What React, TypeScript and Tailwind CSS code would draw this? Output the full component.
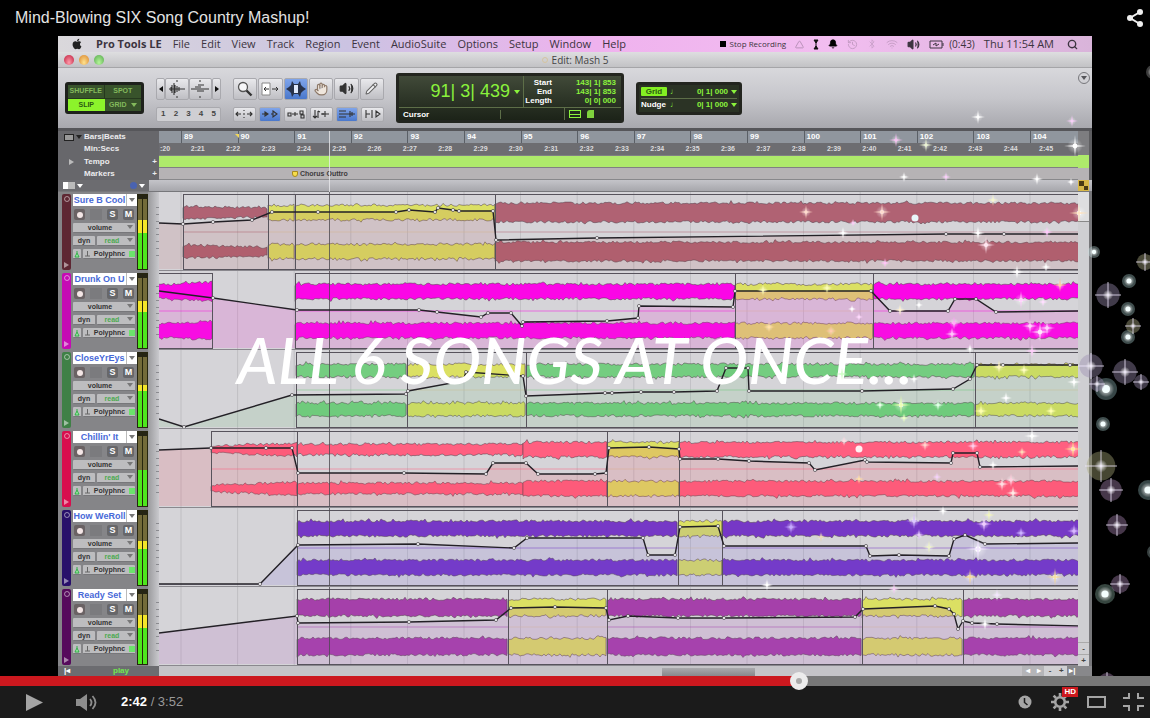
import type { ReactNode } from 'react'
import { FaApple } from 'react-icons/fa'
import { Bell, Bluetooth, Hand, History, Pencil, Search, Triangle, Volume2, Wifi } from 'lucide-react'

type Point = [number, number]

interface Region {
  from: number
  to: number
  half: number
  endHalf?: number
  yellow?: boolean
  joined?: boolean
}

interface Track {
  name: string
  strip: string
  wave: string
  tint: string
  tintOpacity: number
  meterYellow: number
  regions: Region[]
  automation: Point[]
}

// timeline units: one unit is one pixel at the default window size
const VIEW_START = 159
const VIEW_WIDTH = 919
const ROW_HEIGHT = 79
const PLAYHEAD = 330

const menus = ['File', 'Edit', 'View', 'Track', 'Region', 'Event', 'AudioSuite', 'Options', 'Setup', 'Window', 'Help']
const bars = Array.from({ length: 16 }, (_, i) => 89 + i)
const seconds = Array.from({ length: 25 }, (_, i) => `2:${21 + i}`)
const gridLines = Array.from({ length: 16 }, (_, i) => 181 + i * 56.6)

const tracks: Track[] = [
  {
    name: 'Sure B Cool',
    strip: 'bg-[#5e2733]',
    wave: '#b06273',
    tint: '#b04a50',
    tintOpacity: 0.13,
    meterYellow: 13,
    regions: [
      { from: 183, to: 268, half: 7, endHalf: 5 },
      { from: 268, to: 295, half: 8, yellow: true },
      { from: 295, to: 495, half: 8, yellow: true },
      { from: 495, to: 1082, half: 10 }
    ],
    automation: [
      [159, 31], [183, 32], [213, 30], [252, 28], [272, 20], [318, 20], [396, 20], [409, 18], [435, 20],
      [438, 16], [453, 18], [459, 19], [493, 19], [496, 48], [597, 46], [946, 42], [1004, 42], [1082, 42]
    ]
  },
  {
    name: 'Drunk On U',
    strip: 'bg-[#c50bb4]',
    wave: '#fb06e6',
    tint: '#ee30d0',
    tintOpacity: 0.18,
    meterYellow: 11,
    regions: [
      { from: 150, to: 213, half: 7, endHalf: 10 },
      { from: 295, to: 735, half: 8 },
      { from: 735, to: 873, half: 8, yellow: true },
      { from: 873, to: 1082, half: 8 }
    ],
    automation: [
      [159, 20], [213, 27], [297, 39], [419, 39], [437, 41], [481, 46], [488, 42], [511, 42], [522, 55], [523, 51],
      [607, 50], [638, 47], [639, 35], [733, 36], [735, 20], [871, 20], [890, 40], [948, 40], [955, 28], [976, 28],
      [996, 41], [1082, 40]
    ]
  },
  {
    name: 'CloseYrEys',
    strip: 'bg-[#3f8046]',
    wave: '#74cd80',
    tint: '#50c060',
    tintOpacity: 0.12,
    meterYellow: 6,
    regions: [
      { from: 296, to: 407, half: 7 },
      { from: 407, to: 526, half: 7, yellow: true },
      { from: 526, to: 975, half: 7 },
      { from: 975, to: 1082, half: 7, yellow: true }
    ],
    automation: [
      [159, 69], [184, 77], [292, 45], [406, 44], [408, 41], [463, 31], [466, 22], [523, 26], [526, 46], [605, 43],
      [612, 43], [641, 42], [674, 42], [717, 41], [726, 18], [748, 18], [749, 41], [862, 41], [953, 39], [970, 29],
      [977, 15], [1003, 15], [1070, 15], [1082, 15]
    ]
  },
  {
    name: "Chillin' It",
    strip: 'bg-[#d80e4e]',
    wave: '#ff5f80',
    tint: '#f04860',
    tintOpacity: 0.16,
    meterYellow: 0,
    regions: [
      { from: 211, to: 297, half: 4, endHalf: 7 },
      { from: 297, to: 523, half: 6 },
      { from: 523, to: 607, half: 8, joined: true },
      { from: 607, to: 679, half: 8, yellow: true },
      { from: 679, to: 1082, half: 8 }
    ],
    automation: [
      [159, 21], [211, 19], [266, 19], [292, 19], [298, 44], [404, 44], [486, 45], [493, 34], [526, 34], [538, 45],
      [595, 45], [606, 44], [609, 19], [649, 18], [679, 20], [680, 30], [718, 30], [749, 32], [809, 34], [815, 41],
      [865, 31], [867, 33], [951, 34], [953, 24], [977, 24], [980, 38], [1082, 37]
    ]
  },
  {
    name: 'How WeRoll',
    strip: 'bg-[#28106a]',
    wave: '#7638c6',
    tint: '#7058e0',
    tintOpacity: 0.13,
    meterYellow: 8,
    regions: [
      { from: 297, to: 678, half: 8 },
      { from: 678, to: 722, half: 8, yellow: true },
      { from: 722, to: 1082, half: 8 }
    ],
    automation: [
      [159, 76], [260, 76], [298, 37], [418, 36], [514, 40], [527, 30], [643, 30], [648, 47], [675, 47], [680, 19],
      [718, 18], [724, 38], [866, 38], [870, 48], [899, 47], [949, 48], [954, 31], [965, 27], [985, 36], [1082, 35]
    ]
  },
  {
    name: 'Ready Set',
    strip: 'bg-[#560a5c]',
    wave: '#a540aa',
    tint: '#b050c0',
    tintOpacity: 0.15,
    meterYellow: 13,
    regions: [
      { from: 297, to: 508, half: 9 },
      { from: 508, to: 607, half: 9, yellow: true },
      { from: 607, to: 862, half: 9 },
      { from: 862, to: 963, half: 9, yellow: true },
      { from: 963, to: 1082, half: 9 }
    ],
    automation: [
      [159, 46], [297, 29], [298, 36], [409, 35], [496, 33], [511, 21], [555, 20], [606, 21], [609, 33], [628, 29],
      [678, 31], [724, 31], [855, 30], [863, 22], [935, 19], [949, 22], [954, 27], [958, 42], [963, 34], [972, 36],
      [997, 37], [1082, 39]
    ]
  }
]

// x, y, radius, colour
type Sparkle = [number, number, number, string]

const orbs: Sparkle[] = [
  [1094, 252, 6, '#c8e8e8'], [1129, 281, 7, '#b8e0e0'], [1128, 309, 7, '#b8e0e0'], [1128, 337, 7, '#b8e0e0'],
  [1106, 389, 11, '#9fc8cc'], [1103, 424, 7, '#b8e0e0'], [1148, 490, 10, '#9fc8cc'], [1105, 594, 10, '#9fc8b8'],
  [1153, 72, 7, '#b0b0b0'], [1154, 552, 7, '#9fb8b8']
]

const glowStars: Sparkle[] = [
  [1145, 262, 9, '#b0ae86'], [1108, 295, 13, '#9c8cb0'], [1133, 326, 8, '#b0ae86'], [1091, 366, 13, '#9c8cb0'],
  [1125, 372, 13, '#9c8cb0'], [1141, 382, 8, '#9c8cb0'], [1097, 384, 8, '#9c8cb0'], [1101, 466, 16, '#a8a878'],
  [1111, 490, 12, '#a884b0'], [1117, 525, 11, '#a884b0'], [1120, 584, 10, '#a884b0'], [1107, 681, 9, '#a884b0']
]

const stars: Sparkle[] = [
  [978, 117, 7, '#fff'], [1072, 121, 6, '#f3c6f5'], [896, 140, 7, '#f3b8ee'], [926, 145, 7, '#e6f0cc'],
  [1075, 146, 11, '#fff'], [904, 177, 5, '#fff'], [946, 177, 5, '#f6c6f6'], [1037, 179, 6, '#fff'],
  [1071, 182, 4, '#fff'], [806, 212, 7, '#ffd4c4'], [882, 212, 9, '#ffd4c4'], [843, 233, 6, '#fff'],
  [853, 223, 4, '#f7c4f2'], [978, 233, 7, '#fff'], [986, 245, 9, '#ffe0ec'], [885, 263, 5, '#ffb8f4'],
  [1017, 272, 7, '#fff'], [1047, 232, 6, '#ffc0fa'], [1046, 267, 5, '#fff'], [1079, 213, 10, '#ffe0b8'],
  [993, 200, 6, '#f3f3c6'], [763, 290, 6, '#f9f9a8'], [827, 288, 6, '#f9f9a8'], [852, 309, 4, '#fff'],
  [859, 317, 4, '#ffd0fb'], [900, 310, 6, '#fff0c8'], [919, 305, 4, '#fff'], [1021, 300, 9, '#ffc8fc'],
  [1060, 285, 7, '#ffbe90'], [1043, 302, 5, '#ffd8ff'], [954, 323, 7, '#ff9cf6'], [952, 334, 7, '#ffb8fa'],
  [1030, 326, 8, '#ffc4fa'], [1040, 332, 10, '#ffe0fb'], [1047, 328, 8, '#ffc4fa'], [970, 349, 5, '#fff'],
  [1032, 351, 7, '#ffc4fa'], [769, 327, 6, '#ffd890'], [831, 331, 6, '#ffc09a'], [999, 367, 7, '#fff3b0'],
  [1024, 370, 6, '#fffbb0'], [1074, 382, 7, '#fff'], [842, 374, 6, '#c8ffc0'], [914, 379, 5, '#fff'],
  [901, 405, 10, '#e6ffa8'], [880, 405, 5, '#e6ffe6'], [904, 418, 5, '#e6ffb8'], [938, 405, 6, '#d8ffe0'],
  [1006, 398, 6, '#fff'], [981, 411, 7, '#ffff9c'], [1051, 411, 6, '#ffff9c'], [1032, 436, 8, '#fff'],
  [844, 441, 5, '#ffd4dc'], [925, 445, 6, '#ffc8c0'], [973, 446, 6, '#ffc0e4'], [1022, 452, 5, '#ffd0a8'],
  [1073, 449, 9, '#ffe08a'], [993, 465, 5, '#fff'], [937, 477, 5, '#f0c8f4'], [859, 479, 5, '#ffd898'],
  [1011, 480, 7, '#ffc8d8'], [1002, 484, 7, '#ffd8dc'], [1013, 493, 7, '#ffe8e0'], [943, 511, 5, '#fff'],
  [989, 515, 6, '#eef2b0'], [914, 521, 8, '#d4baff'], [919, 535, 6, '#e0c0f8'], [984, 524, 8, '#ecc0ff'],
  [1021, 533, 6, '#c0a0ff'], [1074, 531, 7, '#d0a8ff'], [791, 527, 7, '#b896ff'], [821, 537, 5, '#e8d2a8'],
  [929, 547, 7, '#eaf0c0'], [978, 549, 13, '#f2e4ff'], [970, 577, 8, '#f4d488'], [1055, 577, 9, '#f4d890'],
  [767, 585, 6, '#fff'], [894, 589, 6, '#f4c4f2'], [997, 595, 6, '#f0e0fa'], [985, 624, 6, '#fff']
]

function random(seed: number) {
  let s = seed
  return () => {
    s = (s * 16807) % 2147483647
    return s / 2147483647
  }
}

function wavePath(region: Region, center: number, seed: number) {
  const next = random(seed)
  const top: string[] = []
  const bottom: string[] = []
  const jitter = () => next() * 2.6 - 2 + (next() > 0.92 ? 1.4 : 0)
  for (let x = region.from; x <= region.to; x += 2) {
    const t = (x - region.from) / (region.to - region.from)
    const half = region.half + ((region.endHalf ?? region.half) - region.half) * t
    top.push(`${x},${(center - half - jitter()).toFixed(1)}`)
    bottom.unshift(`${x},${(center + half + jitter()).toFixed(1)}`)
  }
  return `M${top.join('L')}L${bottom.join('L')}Z`
}

function TrackLane({ track, index }: { track: Track; index: number }) {
  const line = track.automation.map((p) => p.join(',')).join(' ')
  return (
    <svg
      className="block h-full w-full"
      viewBox={`${VIEW_START} 0 ${VIEW_WIDTH} ${ROW_HEIGHT}`}
      preserveAspectRatio="none"
      aria-hidden="true"
    >
      <rect x={VIEW_START} width={VIEW_WIDTH} height={ROW_HEIGHT} fill="#d5d4d8" />
      {gridLines.map((x) => (
        <path key={x} d={`M${x} 0V79`} stroke="#a9a9ae" strokeWidth=".8" opacity=".6" />
      ))}
      {track.regions.map((region, i) => (
        <g key={region.from}>
          <path d={`M${region.from} 40H${region.to}`} stroke={region.yellow ? '#d8c49c' : track.wave} opacity=".5" />
          {[20.5, 59.5].map((center, band) => (
            <path
              key={center}
              d={wavePath(region, center, 911 * (index + 1) + 77 * i + 13 * band)}
              fill={region.yellow ? '#dbe063' : track.wave}
              stroke="#54414c"
              strokeWidth=".7"
              strokeOpacity=".75"
            />
          ))}
        </g>
      ))}
      <polygon
        points={`${line} 1082,77 159,77`}
        fill={track.tint}
        opacity={track.tintOpacity}
      />
      <g stroke="#57535c">
        {track.regions.map((region) => (
          <path
            key={region.from}
            d={`M${region.from} 2.500H${region.to}${region.joined ? '' : `M${region.from + 0.5} 2V78`}M${region.from} 77.500H${region.to}`}
          />
        ))}
        {track.regions
          .filter((region) => !track.regions.some((other) => other.from === region.to))
          .map((region) => (
            <path key={region.to} d={`M${region.to - 0.5} 2V78`} />
          ))}
      </g>
      <path d={`M${PLAYHEAD - 0.5} 0V79`} stroke="#4d4a50" opacity=".8" />
      <polyline points={line} fill="none" stroke="#232026" strokeWidth="1.4" />
      {track.automation.slice(1, -1).map(([x, y]) => (
        <circle key={`${x}-${y}`} cx={x} cy={y} r="1.6" fill="#eeecef" stroke="#3a373c" strokeWidth=".6" />
      ))}
      <path d="M159 78.5H1082" stroke="#8a888e" />
    </svg>
  )
}

function DropArrow({ className = '' }: { className?: string }) {
  return (
    <svg viewBox="0 0 6 4" className={`h-1 w-[6px] shrink-0 ${className}`} aria-hidden="true">
      <path d="M0 0h6L3 4z" fill="currentColor" />
    </svg>
  )
}

function TrackHeader({ track }: { track: Track }) {
  const control = 'rounded-[1px] border-b border-[#77777a] bg-[#bdbdbf] text-[#333]'
  return (
    <div className="flex w-[101px] shrink-0 bg-[#858588] pl-1">
      <div className={`mt-[2px] mb-px flex w-[9px] flex-col items-center justify-between rounded-[2px] py-[2px] text-white/50 ${track.strip}`}>
        <span className="size-[6px] rounded-full border border-current" />
        <svg viewBox="0 0 5 6" className="h-[6px] w-[5px]" aria-hidden="true">
          <path d="M0 0l5 3-5 3z" fill="currentColor" />
        </svg>
      </div>
      <div className="flex w-[66px] flex-col gap-[3px] px-[2px] pt-[2px] text-[7px] leading-[10px] font-bold">
        <div className="-mr-[2px] flex h-3 items-center justify-between bg-white pr-[2px]">
          <span className="flex-1 text-center text-[9px] leading-3 whitespace-nowrap text-[#4769d8]">{track.name}</span>
          <span className="flex h-3 items-center border-l border-[#bbb] pl-[2px]">
            <DropArrow className="text-[#777]" />
          </span>
        </div>
        <div className="flex h-[11px] items-center justify-between px-px text-[9px]">
          <button aria-label={`Record ${track.name}`} className="flex size-[11px] items-center justify-center rounded-[2px] bg-[#6a6264]">
            <span className="size-[6px] rounded-full bg-[#f4e6e6]" />
          </button>
          <span className="h-[11px] w-3 bg-[#7b7b7e]" />
          <button aria-label={`Solo ${track.name}`} className="size-[11px] rounded-[2px] bg-[#67676a] leading-[11px] text-white">
            S
          </button>
          <button aria-label={`Mute ${track.name}`} className="size-[11px] rounded-[2px] bg-[#67676a] leading-[11px] text-white">
            M
          </button>
        </div>
        <div className={`relative ${control}`}>
          <select aria-label={`View of ${track.name}`} className="block h-[9px] w-full appearance-none pr-2 text-center text-[7px] leading-[9px]">
            <option>volume</option>
          </select>
          <DropArrow className="pointer-events-none absolute top-[2px] right-[2px] text-[#777]" />
        </div>
        <div className="flex h-[10px] gap-[2px]">
          <button aria-label={`Dynamics of ${track.name}`} className={`w-[22px] leading-[9px] ${control}`}>
            dyn
          </button>
          <div className={`relative flex-1 ${control}`}>
            <select aria-label={`Automation of ${track.name}`} className="block h-[9px] w-full appearance-none pr-2 text-center text-[7px] leading-[9px] text-[#4caa50]">
              <option>read</option>
            </select>
            <DropArrow className="pointer-events-none absolute top-[2px] right-[2px] text-[#777]" />
          </div>
        </div>
        <div className="flex h-[10px] gap-[2px]">
          <button aria-label={`Elastic audio of ${track.name}`} className={`flex w-[8px] items-center justify-center ${control}`}>
            <svg viewBox="0 0 6 8" className="h-2 w-[6px]" aria-hidden="true">
              <path d="M3 1v2L1 7h4L3 3" fill="#a8f0ae" stroke="#2fae45" />
            </svg>
          </button>
          <button className={`flex flex-1 items-center justify-between pl-[2px] leading-[9px] ${control}`}>
            <svg viewBox="0 0 5 7" className="h-[7px] w-[5px]" aria-hidden="true">
              <path d="M2.500 1v5M0 6h5" fill="none" stroke="#666" />
            </svg>
            Polyphnc
            <span className="size-[6px] bg-[#6be36b]" />
          </button>
        </div>
      </div>
      <div className="mt-[2px] mb-px flex w-[11px] gap-px bg-[#26250f] p-px">
        {[0, 1].map((side) => (
          <div key={side} className="flex flex-1 flex-col justify-end bg-[#736b3a]">
            <div className="h-1 bg-[#252415]" />
            <div className="flex-1" />
            <div className="bg-[#f3e629]" style={{ height: track.meterYellow }} />
            <div className="h-[36px] bg-[#4ee61d]" />
          </div>
        ))}
      </div>
      <div className="flex flex-1 flex-col items-end justify-around bg-linear-to-r from-[#9a9a9d] to-[#c9c9cd] py-3">
        {[0, 1, 2, 3, 4, 5, 6, 7].map((tick) => (
          <span key={tick} className="h-px w-[3px] bg-[#8b8b90]" />
        ))}
      </div>
    </div>
  )
}

interface RulerRowProps {
  label: string
  className: string
  children?: ReactNode
  marker?: ReactNode
  wide?: boolean
}

function RulerRow({ label, className, children, marker, wide }: RulerRowProps) {
  return (
    <div className={`flex overflow-hidden ${className}`}>
      <div className="flex w-[101px] shrink-0 items-center bg-[#67676b] pr-[2px] text-[8px] font-bold text-[#ececee]">
        <span className="flex w-[26px] items-center gap-[2px] pl-[6px]">{marker}</span>
        <span className="flex-1">{label}</span>
        {wide && <span>+</span>}
      </div>
      <div className="min-w-0 flex-1">{children}</div>
      <div className={`w-[14px] shrink-0 border-r-[3px] border-[#5d5d60] ${wide ? '' : 'bg-[#7d7d80]'}`} />
    </div>
  )
}

interface ToolButtonProps {
  label: string
  width?: string
  active?: boolean
  small?: boolean
  children: ReactNode
}

function ToolButton({ label, width = 'flex-1', active, small, children }: ToolButtonProps) {
  return (
    <button
      aria-label={label}
      className={`flex min-w-0 items-center justify-center overflow-hidden rounded-[2px] border border-[#a9a9ae] text-[#333] ${width} ${small ? 'h-[15px]' : 'h-[22px]'} ${active ? 'bg-linear-to-b from-[#7fa4ea] to-[#4a78cc]' : 'bg-linear-to-b from-[#e9e9ec] to-[#bfbfc4]'}`}
    >
      {children}
    </button>
  )
}

function Glyph({ d, small }: { d: string; small?: boolean }) {
  return (
    <svg viewBox={small ? '0 0 18 10' : '0 0 20 18'} className={`shrink-0 ${small ? 'h-[10px] w-[18px]' : 'h-[18px] w-5'}`} aria-hidden="true">
      <path d={d} fill="none" stroke="currentColor" strokeWidth="1.1" />
    </svg>
  )
}

const smallGlyphs = [
  { label: 'Zoom toggle', d: 'M1 5h5M3 3L1 5l2 2M12 5h5M15 3l2 2-2 2M9 1v1M9 8v1M8 5h2' },
  { label: 'Tab to transient', d: 'M1 5h5M4 3l3 2-3 2zM10 5h2M12 2l4 3-4 3z', active: true },
  { label: 'Link timeline', d: 'M1 4h3v3H1zM5 5h6M8 3v4M13 2h3v3h-3zM14 6h3v3h-3z' },
  { label: 'Link track', d: 'M3 1v8M1 7l2 2 2-2M6 2v7M6 2l2 1M9 5h8M13 2v6M11 4v2' },
  { label: 'Mirrored editing', d: 'M1 2h7M1 5h16M1 8h7M12 2v6M14 3v4', active: true },
  { label: 'Insertion follows playback', d: 'M2 1v8M2 5h4M8 1v8M12 2l4 3-4 3z' }
]

function EditToolbar() {
  return (
    <div className="relative flex h-[60px] items-center gap-3 bg-linear-to-b from-[#d8d8dc] via-[#c6c6cb] to-[#a8a8ae] pl-[7px]">
      <div className="grid h-8 w-[79px] shrink-0 grid-cols-2 rounded-[3px] border-[3px] border-[#1e211c] bg-[#38532b] text-[7px] font-bold text-[#83b95c]">
        <button className="border-r border-b border-[#26391e]">SHUFFLE</button>
        <button className="border-b border-[#26391e]">SPOT</button>
        <button className="bg-[#8cf32b] text-[#2d5a12]">SLIP</button>
        <button className="flex items-center justify-center gap-1">
          GRID <DropArrow />
        </button>
      </div>

      <div className="flex w-[65px] shrink-0 flex-col gap-[7px] pt-[3px]">
        <div className="flex">
          <ToolButton label="Zoom out" width="w-[9px]">
            <svg viewBox="0 0 4 6" className="h-[6px] w-1 shrink-0" aria-hidden="true">
              <path d="M4 0v6L0 3z" fill="#111" />
            </svg>
          </ToolButton>
          <ToolButton label="Zoom audio">
            <Glyph d="M2 9h16M4 7v4M5 5v8M7 3v12M8 5v8M10 6v6M12 7v4M9 1h2M9 17h2" />
          </ToolButton>
          <ToolButton label="Zoom MIDI">
            <Glyph d="M1 9h18M5 7h6M8 5h6M7 11h7M9 1h2M9 17h2" />
          </ToolButton>
          <ToolButton label="Zoom in" width="w-[9px]">
            <svg viewBox="0 0 4 6" className="h-[6px] w-1 shrink-0" aria-hidden="true">
              <path d="M0 0v6l4-3z" fill="#111" />
            </svg>
          </ToolButton>
        </div>
        <div className="flex h-[15px] items-center rounded-[2px] border border-[#a9a9ae] bg-[#cfcfd3]">
          {[1, 2, 3, 4, 5].map((preset) => (
            <button key={preset} className="flex-1 text-[8px] font-bold text-[#444]">
              {preset}
            </button>
          ))}
        </div>
      </div>

      <div className="flex w-[151px] shrink-0 flex-col gap-[7px] pt-[3px]">
        <div className="flex gap-px">
          <ToolButton label="Zoomer">
            <svg viewBox="0 0 16 16" className="size-4 shrink-0" aria-hidden="true">
              <circle cx="6" cy="6" r="4.500" fill="#f6f6f8" stroke="#555" strokeWidth="1.300" />
              <path d="M9.500 9.500l5 5" stroke="#333" strokeWidth="2.400" />
            </svg>
          </ToolButton>
          <ToolButton label="Trimmer">
            <svg viewBox="0 0 20 18" className="h-[18px] w-5 shrink-0" aria-hidden="true">
              <path d="M2 3h8v12H2z" fill="#fff" stroke="#888" />
              <path d="M4 9h5M6 7L4 9l2 2M12 9h6M16 7l2 2-2 2" fill="none" stroke="#333" />
            </svg>
          </ToolButton>
          <ToolButton label="Selector" active>
            <svg viewBox="0 0 20 18" className="h-[18px] w-5 shrink-0" aria-hidden="true">
              <path d="M0 9l3-2 2-2 1-4 2 3h4l2-3 1 4 2 2 3 2-3 2-2 2-1 4-2-3H8l-2 3-1-4-2-2z" fill="#28324a" />
              <path d="M8 5h4v8H8z" fill="#dfe8fa" />
            </svg>
          </ToolButton>
          <ToolButton label="Grabber">
            <Hand className="size-[14px] text-[#8c7868]" fill="#efe6dc" />
          </ToolButton>
          <ToolButton label="Scrubber">
            <Volume2 className="size-[15px]" fill="currentColor" />
          </ToolButton>
          <ToolButton label="Pencil">
            <Pencil className="size-[13px] text-[#666]" fill="#f3f3f5" />
          </ToolButton>
        </div>
        <div className="flex gap-[3px]">
          {smallGlyphs.map((glyph) => (
            <ToolButton key={glyph.label} label={glyph.label} active={glyph.active} small>
              <Glyph d={glyph.d} small />
            </ToolButton>
          ))}
        </div>
      </div>

      <div className="flex h-[50px] w-[228px] shrink-0 flex-col rounded-[3px] border-[3px] border-[#23251f] bg-linear-to-b from-[#414a39] to-[#1c2318] text-[8px] leading-[9px] font-bold text-white">
        <div className="flex flex-1 border-b border-[#5d6e48]">
          <div className="flex flex-1 items-center justify-end gap-1 border-r border-[#5d6e48] pr-[3px] text-[#8af23c]">
            <span className="text-[18px] font-normal">91| 3| 439</span>
            <DropArrow />
          </div>
          <dl className="grid w-[97px] grid-cols-[28px_1fr] content-center pr-[5px] text-right">
            <dt>Start</dt>
            <dd className="text-[#8af23c]">143| 1| 853</dd>
            <dt>End</dt>
            <dd className="text-[#8af23c]">143| 1| 853</dd>
            <dt>Length</dt>
            <dd className="text-[#8af23c]">0| 0| 000</dd>
          </dl>
        </div>
        <div className="flex h-3 items-center pl-1">
          <span className="w-[98px] border-r border-[#5d6e48]">Cursor</span>
          <span className="h-3 w-[64px] border-r border-[#5d6e48]" />
          <span className="ml-1 flex h-2 w-3 items-center border border-[#8af23c]">
            <span className="h-px w-full bg-[#8af23c]" />
          </span>
          <span className="ml-[6px] h-2 w-[7px] rounded-tl-[3px] bg-[#7fd23d]" />
        </div>
      </div>

      <div className="flex h-[33px] w-[106px] shrink-0 flex-col justify-center rounded-[3px] border-[3px] border-[#23251f] bg-[#2b3325] px-[2px] text-[8px] leading-[12px] font-bold text-[#8af23c]">
        <div className="flex items-center justify-between border-b border-[#5d6e48]">
          <button className="h-[9px] w-[26px] rounded-[1px] bg-[#84f022] leading-[9px] text-[#2d5a12]">Grid</button>
          <span>♩</span>
          <span className="ml-4">0| 1| 000</span>
          <DropArrow />
        </div>
        <div className="flex items-center justify-between">
          <span className="w-[26px] text-white">Nudge</span>
          <span>♩</span>
          <span className="ml-4">0| 1| 000</span>
          <DropArrow />
        </div>
      </div>

      <button
        aria-label="Toolbar menu"
        className="mt-1 mr-[2px] ml-auto flex size-3 items-center justify-center self-start rounded-full border border-[#77777c] text-[#55555a]"
      >
        <DropArrow />
      </button>
    </div>
  )
}

function MenuBar() {
  return (
    <div className="flex h-4 items-center overflow-hidden bg-[linear-gradient(to_right,#dad8db,#cbc3e2_28%,#efb2ee_52%,#f2bdf0_75%,#d9b4da)] pr-[14px] pl-[13px] font-['Open_Sans',sans-serif] text-[11px] leading-4 whitespace-nowrap text-[#3c3440]">
      <FaApple className="size-3 shrink-0 text-[#222]" />
      <nav className="ml-[13px] flex gap-[11px]">
        <button className="font-bold">Pro Tools LE</button>
        {menus.map((menu) => (
          <button key={menu}>{menu}</button>
        ))}
      </nav>
      <div className="ml-auto flex items-center gap-[9px]">
        <span className="flex items-center gap-1 text-[8px]">
          <span className="size-[6px] bg-black" />
          Stop Recording
        </span>
        <Triangle className="size-[9px] opacity-40" />
        <svg viewBox="0 0 6 11" className="h-[11px] w-[6px]" aria-hidden="true">
          <path d="M3 1v9M1 1h4L3 4zM1 10h4L3 7z" stroke="#111" fill="#111" />
        </svg>
        <Bell className="size-[10px] text-black" fill="currentColor" />
        <History className="size-[11px] opacity-25" />
        <Bluetooth className="size-[10px] opacity-20" />
        <Wifi className="size-[12px] opacity-20" />
        <Volume2 className="size-[13px]" fill="currentColor" />
        <span className="flex items-center gap-1 text-[10px]">
          <svg viewBox="0 0 16 9" className="h-[9px] w-4" aria-hidden="true">
            <path d="M1 1h12v7H1zM14 3v3M4 5l3-2v3l3-2" fill="none" stroke="currentColor" />
          </svg>
          (0:43)
        </span>
        <span className="pr-1">Thu 11:54 AM</span>
        <Search className="size-[11px]" strokeWidth={3} />
      </div>
    </div>
  )
}

function EditWindow() {
  return (
    <section className="mx-[58px] flex flex-col overflow-hidden bg-[#c9c8cd]">
      <MenuBar />
      <div className="grid h-4 grid-cols-3 items-center border-b border-[#a5a5a8] bg-linear-to-b from-[#dedee0] to-[#c2c2c5] px-[6px]">
        <div className="flex gap-[5px]">
          <button aria-label="Close" className="size-[10px] rounded-full bg-radial-[at_50%_75%] from-[#ff9cab] to-[#bf1c3c]" />
          <button aria-label="Minimize" className="size-[10px] rounded-full bg-radial-[at_50%_75%] from-[#ffe38f] to-[#d8822a]" />
          <button aria-label="Zoom" className="size-[10px] rounded-full bg-radial-[at_50%_75%] from-[#b5f59a] to-[#55a84c]" />
        </div>
        <h2 className="flex items-center justify-center gap-1 font-['Open_Sans',sans-serif] text-[10px] leading-4 text-[#444]">
          <span className="size-[6px] rounded-full border border-[#d5c49f]" />
          Edit: Mash 5
        </h2>
      </div>
      <EditToolbar />

      <div className="relative border-t-[3px] border-[#56565a]">
        <RulerRow
          label="Bars|Beats"
          className="h-3 bg-[#90969e]"
          marker={
            <>
              <span className="h-[7px] w-[10px] border border-[#222] bg-[#999]" />
              <DropArrow className="text-[#222]" />
            </>
          }
        >
          <div className="grid h-3 grid-cols-[220fr_repeat(15,566fr)_480fr] text-[8px] leading-3 font-bold text-white">
            <span />
            {bars.map((bar) => (
              <span key={bar} className="border-l border-[#5a5f66] pl-[2px]">
                {bar}
              </span>
            ))}
          </div>
        </RulerRow>
        <RulerRow label="Min:Secs" className="h-3 bg-[#6d6d71]">
          <div className="grid h-3 grid-cols-[318fr_repeat(24,354fr)_390fr] text-[7px] leading-3 font-bold text-[#dcdcde]">
            <span className="pl-px">:20</span>
            {seconds.map((second) => (
              <span key={second}>{second}</span>
            ))}
          </div>
        </RulerRow>
        <RulerRow
          label="Tempo"
          wide
          className="h-[13px] bg-[#aeea6b]"
          marker={
            <svg viewBox="0 0 6 6" className="ml-[5px] size-[6px]" aria-hidden="true">
              <path d="M0 0l5 3-5 3z" fill="#bbb" />
            </svg>
          }
        >
          <div className="h-[13px] border-t border-b border-[#808083]" />
        </RulerRow>
        <RulerRow label="Markers" wide className="h-3 bg-[#b6b3b5]">
          <div className="grid h-3 grid-cols-[133fr_786fr] border-b border-[#88888b]">
            <span />
            <span className="flex items-center gap-[2px] text-[7px] leading-[11px] font-bold text-[#3d3b3d]">
              <span className="size-[6px] rounded-b-full border border-[#a88a20] bg-[#f6dd4c]" />
              Chorus Outtro
            </span>
          </div>
        </RulerRow>
        <div className="flex h-3 border-b border-[#77777b] bg-linear-to-b from-[#c4c4c9] to-[#a7a7ac]">
          <div className="flex w-[91px] items-center gap-[2px] bg-[#6c6c70] pl-[5px] text-white">
            <span className="h-[7px] w-3 border-l-[5px] border-white bg-[#bbb]" />
            <DropArrow />
            <span className="ml-[45px] size-[7px] rounded-full bg-[#4a63b0]" />
            <DropArrow />
          </div>
          <span className="mr-[3px] ml-auto grid size-[11px] grid-cols-2 border border-[#d8b848] bg-[#d8b848]">
            <span className="bg-[#4b3b14]" />
            <span />
            <span />
            <span className="bg-[#4b3b14]" />
          </span>
        </div>
        <div className="pointer-events-none absolute top-0 right-[14px] bottom-0 left-[101px]">
          <svg className="block h-full w-full" viewBox={`${VIEW_START} 0 ${VIEW_WIDTH} 61`} preserveAspectRatio="none" aria-hidden="true">
            <path d={`M${PLAYHEAD - 0.5} 0V61`} stroke="#e9e9ec" opacity=".8" />
            <path d="M235 3h4v4z" fill="#f1d75a" />
          </svg>
        </div>
      </div>

      <div className="flex">
        <div className="min-w-0 flex-1">
          {tracks.map((track, index) => (
            <div key={track.name} className="flex h-[79px]">
              <TrackHeader track={track} />
              <div className="min-w-0 flex-1">
                <TrackLane track={track} index={index} />
              </div>
            </div>
          ))}
        </div>
        <div className="flex w-[14px] flex-col justify-between border-r-[3px] border-[#77777a] bg-[#cfcfd2] text-center text-[8px] leading-[11px] font-bold text-[#444]">
          <div className="h-[30px] border-b border-[#888] bg-[#dedee0]" />
          <div className="flex flex-col">
            <button className="border-t border-[#aaa]">-</button>
            <button className="border-t border-[#aaa]">+</button>
          </div>
        </div>
      </div>

      <div className="flex h-[10px] text-[8px] leading-[10px] font-bold">
        <div className="flex w-[101px] bg-[#6c6c70] pl-[6px]">
          <span className="w-[49px] text-white">|◂</span>
          <span className="text-[#71e84e]">play</span>
        </div>
        <div className="grid flex-1 grid-cols-[503fr_93fr_267fr] bg-[#c5c4c8] pt-[2px]">
          <span />
          <span className="bg-linear-to-b from-[#aaa9ad] to-[#88878b]" />
        </div>
        <div className="flex w-[70px] bg-[#88888b] pr-[14px] text-center text-[#444]">
          <button className="flex-1 bg-[#b5b5b8] text-white">◂</button>
          <button className="flex-1 bg-[#b5b5b8] text-white">▸</button>
          <button className="flex-1 bg-[#d0d0d3]">-</button>
          <button className="flex-1 bg-[#d0d0d3]">+</button>
          <button className="flex-1 text-white">▸|</button>
        </div>
      </div>
    </section>
  )
}

function Sparkles() {
  return (
    <svg
      className="pointer-events-none absolute inset-0 h-full w-full"
      viewBox="0 0 1150 718"
      preserveAspectRatio="xMaxYMin meet"
      aria-hidden="true"
    >
      <defs>
        <radialGradient id="glow">
          <stop offset="0" stopColor="#fff" />
          <stop offset=".25" stopColor="#fff" stopOpacity=".7" />
          <stop offset="1" stopColor="#fff" stopOpacity="0" />
        </radialGradient>
      </defs>
      {orbs.map(([x, y, r, color]) => (
        <g key={`${x}-${y}`}>
          <circle cx={x} cy={y} r={r} fill={color} opacity=".35" />
          <circle cx={x} cy={y} r={r * 0.75} fill="url(#glow)" />
          <circle cx={x} cy={y} r={r * 0.36} fill="#f4ffff" />
        </g>
      ))}
      {glowStars.map(([x, y, r, color]) => (
        <g key={`${x}-${y}`}>
          <circle cx={x} cy={y} r={r * 0.9} fill={color} opacity=".42" />
          <circle cx={x} cy={y} r={r * 0.4} fill="url(#glow)" />
          <path d={`M${x - r} ${y}H${x + r}M${x} ${y - r}V${y + r}`} stroke="#f2eaff" opacity=".8" />
        </g>
      ))}
      {stars.map(([x, y, r, color]) => (
        <g key={`${x}-${y}`} fill={color}>
          <circle cx={x} cy={y} r={r * 0.7} fill="url(#glow)" opacity=".6" />
          <circle cx={x} cy={y} r={r * 0.22} fill="#fff" />
          <path
            opacity=".85"
            d={`M${x - r} ${y}L${x} ${y - 1}L${x + r} ${y}L${x} ${y + 1}ZM${x} ${y - r}L${x + 1} ${y}L${x} ${y + r}L${x - 1} ${y}Z`}
          />
        </g>
      ))}
      <circle cx="915" cy="218" r="3.500" fill="#e8f6fa" />
      <circle cx="859" cy="449" r="3.500" fill="#fff0f2" />
    </svg>
  )
}

function PlayerControls() {
  return (
    <footer className="relative z-10 bg-[#1b1b1b] text-[#a5a5a5]">
      <input
        type="range"
        aria-label="Seek"
        min={0}
        max={232}
        defaultValue={162}
        className="block h-[10px] w-full appearance-none bg-linear-to-r from-[#cc181e] from-[69.4%] to-[#777] to-[69.4%] [&::-webkit-slider-thumb]:size-[18px] [&::-webkit-slider-thumb]:appearance-none [&::-webkit-slider-thumb]:rounded-full [&::-webkit-slider-thumb]:border-[6px] [&::-webkit-slider-thumb]:border-[#ececec] [&::-webkit-slider-thumb]:bg-[#aaa]"
      />
      <div className="flex h-8 items-center pr-[6px] pl-[26px]">
        <button aria-label="Play">
          <svg viewBox="0 0 17 17" className="size-[17px]">
            <path d="M0 0l17 8.500L0 17z" fill="currentColor" />
          </svg>
        </button>
        <button aria-label="Mute" className="ml-[33px]">
          <svg viewBox="0 0 22 17" className="h-[17px] w-[22px]">
            <path d="M0 5h4l7-5v17l-7-5H0z" fill="#8e8e8e" />
            <path d="M14 5q3 3.500 0 7M16.500 2q6 6.500 0 13" fill="none" stroke="#8e8e8e" strokeWidth="1.800" />
          </svg>
        </button>
        <p className="ml-[23px] text-[13px] text-[#999]">
          <span className="font-bold text-white">2:42</span> / 3:52
        </p>
        <div className="ml-auto flex items-center">
          <button aria-label="Watch later">
            <svg viewBox="0 0 14 14" className="size-[14px]">
              <circle cx="7" cy="7" r="6.500" fill="currentColor" />
              <path d="M6.500 3v4.500l3 2.500" fill="none" stroke="#1b1b1b" strokeWidth="1.500" />
            </svg>
          </button>
          <button aria-label="Settings" className="relative ml-[19px]">
            <svg viewBox="-9 -9 18 18" className="size-[18px]">
              <circle r="4.800" fill="none" stroke="currentColor" strokeWidth="2.600" />
              <path
                d="M0-5.500V-9M0 5.500V9M-5.500 0H-9M5.500 0H9M-4-4l-2.400-2.400M4 4l2.400 2.400M-4 4l-2.400 2.400M4-4l2.400-2.400"
                stroke="currentColor"
                strokeWidth="2.600"
              />
            </svg>
            <span className="absolute -top-[6px] -right-[9px] h-[10px] bg-[#cc181e] px-[2px] text-[8px] leading-[10px] font-bold text-white">
              HD
            </span>
          </button>
          <button aria-label="Theater mode" className="ml-[18px] h-3 w-[19px] border-2 border-current" />
          <button aria-label="Exit full screen" className="ml-[17px]">
            <svg viewBox="0 0 21 18" className="h-[18px] w-[21px]">
              <path d="M0 5h6V0M15 0v5h6M0 13h6v5M15 18v-5h6" fill="none" stroke="currentColor" strokeWidth="2" />
            </svg>
          </button>
        </div>
      </div>
    </footer>
  )
}

export default function App() {
  return (
    <div className="relative flex min-h-screen flex-col overflow-hidden bg-black font-['Liberation_Sans',Arial,sans-serif]">
      <header className="flex h-9 items-center justify-between pr-[7px] pl-[15px]">
        <h1 className="text-[16px] text-[#e3e3e3]">Mind-Blowing SIX Song Country Mashup!</h1>
        <button aria-label="Share">
          <svg viewBox="0 0 16 18" className="h-[18px] w-4">
            <path d="M13 3L3 9l10 6" fill="none" stroke="#eee" strokeWidth="2" />
            <g fill="#eee">
              <circle cx="13" cy="3" r="3" />
              <circle cx="3" cy="9" r="3" />
              <circle cx="13" cy="15" r="3" />
            </g>
          </svg>
        </button>
      </header>
      <main className="relative flex-1">
        <EditWindow />
        <p className="pointer-events-none absolute inset-x-0 top-[284px] text-center font-['Lato',sans-serif] text-[64px] leading-[80px] font-medium whitespace-nowrap text-white italic">
          ALL 6 SONGS AT ONCE...
        </p>
      </main>
      <Sparkles />
      <PlayerControls />
    </div>
  )
}
